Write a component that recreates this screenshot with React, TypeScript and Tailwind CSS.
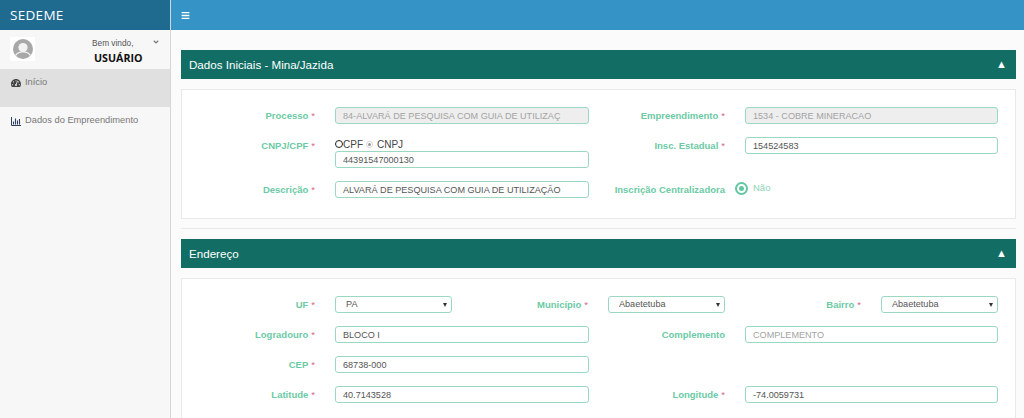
import type { ReactNode } from "react";
import { FaAngleDown, FaBars, FaTachometerAlt } from "react-icons/fa";

const sans = "font-['Liberation_Sans',Arial,sans-serif]";

function FieldLabel({ text, required = true }: { text: string; required?: boolean }) {
  return (
    <label className="flex h-[17px] translate-y-[1px] items-center justify-end whitespace-nowrap text-[9.5px] font-bold text-[#6bcaa5]">
      {text}
      {required && <span className="ml-[3px] font-normal text-[#d9668a]">*</span>}
    </label>
  );
}

function TextField({ value, disabled, muted }: { value: string; disabled?: boolean; muted?: boolean }) {
  const tone = disabled ? "bg-[#eeeeee] text-[#a3a3a3]" : muted ? "bg-white text-[#a3a3a3]" : "bg-white text-[#555555]";
  return (
    <input
      readOnly
      value={value}
      className={`block h-[17px] w-full rounded-[3px] border border-[#9bd8c2] px-[7px] text-[9.1px] leading-none outline-none ${tone}`}
    />
  );
}

function SelectField({ value }: { value: string }) {
  return (
    <div className="relative">
      <select
        value={value}
        onChange={() => undefined}
        className="block h-[17px] w-full appearance-none rounded-[3px] border border-[#9bd8c2] bg-white px-[10px] text-[9.1px] leading-none text-[#555555] outline-none"
      >
        <option>{value}</option>
      </select>
      <span className="pointer-events-none absolute right-[5px] top-[7px] h-0 w-0 border-x-[2.5px] border-t-[4px] border-x-transparent border-t-[#333333]" />
    </div>
  );
}

function Section({ title, children }: { title: string; children: ReactNode }) {
  return (
    <section>
      <header className="flex h-[29px] items-center justify-between bg-[#126e64] pl-2 pr-[9px] text-[11.6px] text-white">
        <span>{title}</span>
        <span className="text-[11px]">▲</span>
      </header>
      <div className="mt-[10px] border border-[#e9e9e9] bg-white">{children}</div>
    </section>
  );
}

export default function App() {
  return (
    <div className={`flex h-[418px] w-[1024px] overflow-hidden bg-[#fbfbfb] ${sans}`}>
      <aside className="flex w-[171px] shrink-0 flex-col border-r border-[#d6d6d6] bg-[#f7f7f7]">
        <div className="flex h-[30px] shrink-0 items-center bg-[#1f6a8f] pl-[10px] font-['Open_Sans',sans-serif] text-[13.5px] tracking-[0.3px] text-white">
          SEDEME
        </div>
        <div className="flex h-[39px] shrink-0 items-start pl-[10px]">
          <div className="mt-[7px] flex h-[24px] w-[25px] items-center justify-center bg-white">
            <svg viewBox="0 0 20 20" className="h-5 w-5">
              <circle cx="10" cy="10" r="10" fill="#a8a8a8" />
              <circle cx="10" cy="8.5" r="4.6" fill="#f2f2f2" />
              <path d="M2.6 16.5c1.6-2.6 4-3.6 7.4-3.6s5.8 1 7.4 3.6" fill="none" stroke="#f2f2f2" strokeWidth="1.4" />
            </svg>
          </div>
          <div className="ml-[57px] mt-[8px] w-[50px] text-[8.3px] leading-[10px] text-[#555555]">
            <div>Bem vindo,</div>
            <div className="ml-[2px] mt-[3px] font-['Open_Sans',sans-serif] text-[10.7px] font-bold leading-[14px] text-[#111111]">USUÁRIO</div>
          </div>
          <FaAngleDown className="ml-[10px] mt-[8px] h-[8px] w-[8px] text-[#777777]" />
        </div>
        <div className="flex h-[38px] shrink-0 items-start gap-[4px] bg-[#e0e0e0] pl-[11px] pt-[7px] text-[9.3px] leading-[12px] text-[#777777]">
          <FaTachometerAlt className="mt-[2px] h-[10px] w-[10px] text-[#444444]" />
          Início
        </div>
        <div className="flex items-start gap-[4px] pl-[11px] pt-[7px] text-[9.3px] leading-[12px] text-[#777777]">
          <svg viewBox="0 0 10 10" className="mt-[2px] h-[10px] w-[10px]">
            <path d="M0.5 1v8.5H10" fill="none" stroke="#2f3f5f" />
            <path d="M2.5 5.5v3M4.5 2.5v6M6.5 4.5v4M8.5 3v5.5" fill="none" stroke="#2f3f5f" strokeWidth="1.1" />
          </svg>
          Dados do Empreendimento
        </div>
      </aside>

      <main className="flex min-w-0 flex-1 flex-col">
        <div className="flex h-[30px] shrink-0 items-center bg-[#3594c5] pl-[10px] text-white">
          <FaBars className="h-[9px] w-[9px]" />
        </div>
        <div className="flex flex-col pl-[10px] pr-2 pt-5">
          <Section title="Dados Iniciais - Mina/Jazida">
            <div className="grid grid-cols-[133px_254px_116px_253px] gap-x-5 pb-[20px] pt-[17px]">
              <FieldLabel text="Processo" />
              <TextField value="84-ALVARÁ DE PESQUISA COM GUIA DE UTILIZAÇ" disabled />
              <FieldLabel text="Empreendimento" />
              <TextField value="1534 - COBRE MINERACAO" disabled />

              <div className="mt-[13px]">
                <FieldLabel text="CNPJ/CPF" />
              </div>
              <div className="mt-[13px]">
                <div className="flex h-[14px] items-center text-[10px] text-[#444444]">
                  <span className="h-2 w-2 rounded-full border border-[#222222] bg-white" />
                  <span>CPF</span>
                  <span className="ml-[3px] mr-[4px] flex h-[7px] w-[7px] items-center justify-center rounded-full border border-[#d5d5d5]">
                    <span className="h-[3px] w-[3px] rounded-full bg-[#999999]" />
                  </span>
                  <span>CNPJ</span>
                </div>
                <TextField value="44391547000130" />
              </div>
              <div className="mt-[13px]">
                <FieldLabel text="Insc. Estadual" />
              </div>
              <div className="mt-[13px]">
                <TextField value="154524583" />
              </div>

              <div className="mt-[13px]">
                <FieldLabel text="Descrição" />
              </div>
              <div className="mt-[13px]">
                <TextField value="ALVARÁ DE PESQUISA COM GUIA DE UTILIZAÇÃO" />
              </div>
              <div className="mt-[13px]">
                <FieldLabel text="Inscrição Centralizadora" required={false} />
              </div>
              <div className="mt-[10px] flex items-center gap-[5px] text-[9.5px] text-[#8fd3b8]">
                <span className="-ml-[10px] flex h-[13px] w-[13px] items-center justify-center rounded-full border-2 border-[#62c7a0]">
                  <span className="h-[5px] w-[5px] rounded-full bg-[#62c7a0]" />
                </span>
                <span>Não</span>
              </div>
            </div>
          </Section>

          <hr className="mb-[10px] mt-[9px] border-[#e9e9e9]" />

          <Section title="Endereço">
            <div className="pt-[17px]">
              <div className="grid grid-cols-[133px_117px_116px_117px_116px_117px] gap-x-5">
                <FieldLabel text="UF" />
                <SelectField value="PA" />
                <FieldLabel text="Município" />
                <SelectField value="Abaetetuba" />
                <FieldLabel text="Bairro" />
                <SelectField value="Abaetetuba" />
              </div>
              <div className="mt-[13px] grid grid-cols-[133px_254px_116px_253px] gap-x-5 gap-y-[13px] pb-5">
                <FieldLabel text="Logradouro" />
                <TextField value="BLOCO I" />
                <FieldLabel text="Complemento" required={false} />
                <TextField value="COMPLEMENTO" muted />

                <FieldLabel text="CEP" />
                <TextField value="68738-000" />
                <div />
                <div />

                <FieldLabel text="Latitude" />
                <TextField value="40.7143528" />
                <FieldLabel text="Longitude" />
                <TextField value="-74.0059731" />
              </div>
            </div>
          </Section>
        </div>
      </main>
    </div>
  );
}
